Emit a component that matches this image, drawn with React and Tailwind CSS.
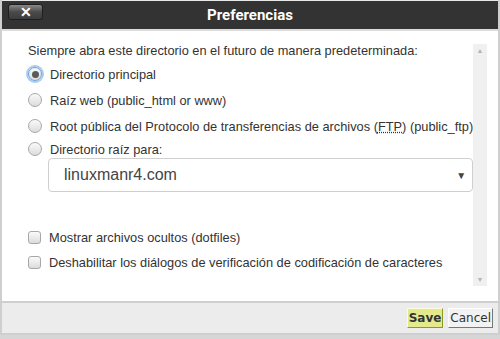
import { useState } from "react";

const Radio = ({ checked, onChange, children }) => (
  <label className="flex items-center h-[26px] cursor-pointer whitespace-nowrap">
    <span
      onClick={onChange}
      className={`w-[14px] h-[14px] shrink-0 rounded-full flex items-center justify-center bg-gradient-to-b from-[#fafafa] to-[#dcdcdc] border ${
        checked ? "border-[#6a9fd4] ring-2 ring-[#a9ccf0]" : "border-[#a8a8a8]"
      }`}
    >
      {checked && <span className="w-[7px] h-[7px] rounded-full bg-[#5a5a5a]" />}
    </span>
    <span className="ml-[8px]">{children}</span>
  </label>
);

const Check = ({ checked, onChange, children }) => (
  <label className="flex items-center h-[25px] cursor-pointer whitespace-nowrap">
    <span
      onClick={onChange}
      className="w-[13px] h-[13px] shrink-0 rounded-[3px] border border-[#a8a8a8] bg-gradient-to-b from-[#fafafa] to-[#dcdcdc] flex items-center justify-center text-[10px]"
    >
      {checked ? "✓" : ""}
    </span>
    <span className="ml-[8px]">{children}</span>
  </label>
);

export default function App() {
  const [dir, setDir] = useState("home");
  const [opts, setOpts] = useState({ dotfiles: false, charset: false });

  return (
    <div className="w-[500px] h-[339px] bg-[#d6d6d6] font-['Liberation_Sans',Arial,sans-serif] text-[12.8px] text-[#333]">
      <div className="w-[500px] h-[335px] bg-white border-x-[2px] border-[#cfcfcf] flex flex-col">
        {/* header */}
        <div className="h-[29px] bg-[#333] border-t border-[#e8e8e8] flex items-center relative shrink-0">
          <button className="absolute left-[6px] top-[3px] w-[35px] h-[16px] rounded-[3px] border border-[#1e1e1e] bg-gradient-to-b from-[#8a8a8a] via-[#4a4a4a] to-[#3c3c3c] flex items-center justify-center text-white font-bold text-[14px] leading-none">
            ✕
          </button>
          <div className="w-full text-center text-white font-bold text-[15px] font-['Roboto',sans-serif]">
            Preferencias
          </div>
        </div>
        <div className="h-[2px] bg-[#dcdcdc] shrink-0" />

        {/* body */}
        <div className="flex-1 flex">
          <div className="flex-1 pl-[26px] pt-[10px]">
            <div className="mb-[1px]">
              Siempre abra este directorio en el futuro de manera predeterminada:
            </div>
            <Radio checked={dir === "home"} onChange={() => setDir("home")}>
              Directorio principal
            </Radio>
            <Radio checked={dir === "web"} onChange={() => setDir("web")}>
              Raíz web (public_html or www)
            </Radio>
            <Radio checked={dir === "ftp"} onChange={() => setDir("ftp")}>
              Root pública del Protocolo de transferencias de archivos (
              <abbr className="underline decoration-dotted">FTP</abbr>) (public_ftp)
            </Radio>
            <div className="-mt-[3px]">
              <Radio checked={dir === "other"} onChange={() => setDir("other")}>
                Directorio raíz para:
              </Radio>
            </div>
            <div className="ml-[20px] mt-[-4px] h-[34px] border border-[#cfcfcf] rounded-[4px] flex items-center justify-between px-[15px] text-[16px] text-[#444]">
              <span>linuxmanr4.com</span>
              <span className="text-[10px] text-[#444] -mr-[9px]">▼</span>
            </div>
            <div className="mt-[33px]">
              <Check
                checked={opts.dotfiles}
                onChange={() => setOpts((p) => ({ ...p, dotfiles: !p.dotfiles }))}
              >
                Mostrar archivos ocultos (dotfiles)
              </Check>
              <Check
                checked={opts.charset}
                onChange={() => setOpts((p) => ({ ...p, charset: !p.charset }))}
              >
                Deshabilitar los diálogos de verificación de codificación de caracteres
              </Check>
            </div>
          </div>
          {/* scrollbar */}
          <div className="w-[16px] mt-[13px] mb-[15px] bg-[#f0f0f0] flex flex-col justify-between items-center text-[7px] text-[#b5b5b5] py-[3px] leading-none">
            <span>▲</span>
            <span>▼</span>
          </div>
          <div className="w-[13px]" />
        </div>

        {/* footer */}
        <div className="h-[34px] bg-[#ececec] border-t-[2px] border-b-[2px] border-[#cfcfcf] flex items-center justify-end gap-[5px] pr-[5px] shrink-0 font-['DejaVu_Sans',Verdana,sans-serif] text-[12px]">
          <button className="h-[20px] px-[1px] bg-[#e4ea8c] border border-[#fafce0] border-b-[#8e9a1e] border-r-[#8e9a1e] font-bold text-[#333]">
            Save
          </button>
          <button className="h-[20px] px-[1px] bg-[#f2f2f2] border border-white border-b-[#777] border-r-[#777] text-[#333]">
            Cancel
          </button>
        </div>
      </div>
    </div>
  );
}
